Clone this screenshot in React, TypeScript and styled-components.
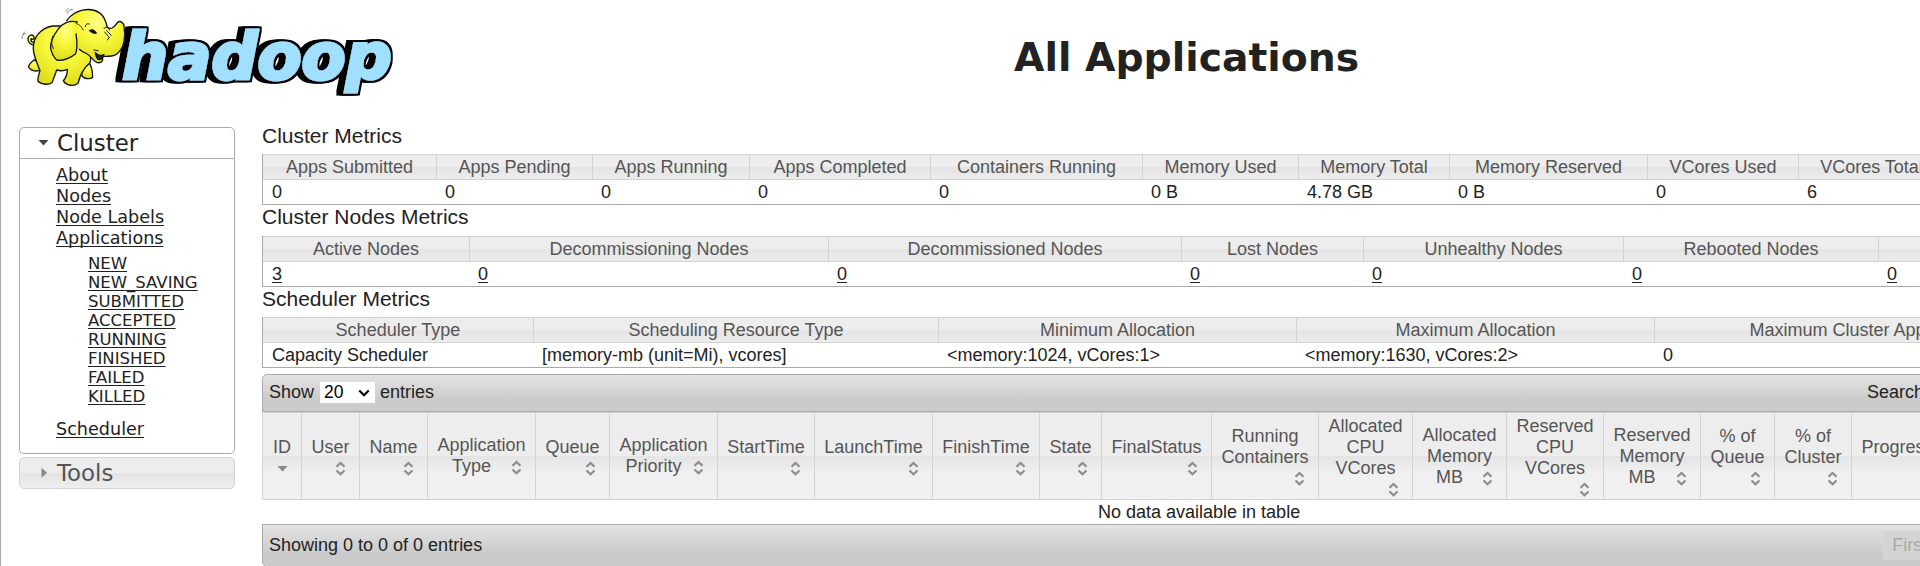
import React from 'react';
import styled, { createGlobalStyle, css } from 'styled-components';

const GlobalStyle = createGlobalStyle`
  body {
    margin: 0;
    background: #fff;
    color: #222;
    overflow: hidden;
    font-family: 'DejaVu Sans', Verdana, sans-serif;
  }
`;

const Page = styled.div`
  box-sizing: border-box;
  height: 566px;
  overflow: hidden;
  border-left: 1px solid #aaa;
`;

const Header = styled.header`
  display: flex;
  align-items: flex-start;
  height: 127px;
`;

const LogoLink = styled.a`
  flex: none;
  width: 420px;
  height: 110px;
  margin-left: -1px;
`;

const Title = styled.h1`
  margin: 35px 0 0 594px;
  font-size: 39.3px;
  line-height: 46px;
  font-weight: bold;
  white-space: nowrap;
`;

const Columns = styled.div`
  display: flex;
  align-items: flex-start;
`;

const Sidebar = styled.nav`
  flex: none;
  box-sizing: border-box;
  width: 261px;
  padding: 0 27px 0 18px;
`;

const glass = css`
  color: #555;
  background: linear-gradient(#ededed 50%, #e4e4e4 50%, #f0f0f0 calc(50% + 18px));
`;

const bar = css`
  border: 1px solid #aaa;
  background: linear-gradient(#e3e3e3, #cbcbcb 70%, #cbcbcb);
`;

const SectionHeader = styled.h3<{ $open?: boolean }>`
  box-sizing: border-box;
  display: flex;
  align-items: center;
  height: 32px;
  margin: 0;
  padding-left: 18px;
  font-size: 22.9px;
  font-weight: normal;
  ${(p) =>
    p.$open
      ? css`
          border: 1px solid #aaa;
          border-radius: 5px 5px 0 0;
          background: #fff;
        `
      : css`
          ${glass}
          margin-top: 3px;
          border: 1px solid #d3d3d3;
          border-radius: 5px;
        `}
  svg {
    flex: none;
    margin-right: 7px;
  }
`;

const SectionBody = styled.div`
  box-sizing: border-box;
  height: 295px;
  padding: 6px 0 0 36px;
  border: 1px solid #aaa;
  border-top: 0;
  border-radius: 0 0 5px 5px;
`;

const NavList = styled.ul`
  margin: 0;
  padding: 0;
  list-style: none;
  font-size: 17.6px;
  line-height: 21px;
`;

const StateList = styled(NavList)`
  margin: 5px 0 13px 32px;
  font-size: 16.5px;
  line-height: 19px;
`;

const Link = styled.a`
  color: #222;
  text-decoration: underline;
  text-decoration-thickness: 1px;
  text-underline-offset: 2px;
  text-decoration-skip-ink: none;
`;

const Content = styled.main`
  flex: none;
  width: 2300px;
  margin-top: -3px;
  font-family: 'Liberation Sans', Arial, sans-serif;
  font-size: 18px;
`;

const MetricsTitle = styled.div<{ $height: number }>`
  height: ${(p) => p.$height}px;
  font-size: 21px;
  line-height: 23px;
`;

const MetricsTable = styled.div<{ $cols: string }>`
  display: grid;
  grid-template-columns: ${(p) => p.$cols};
  border-left: 1px solid #aaa;
`;

const MetricsHead = styled.div`
  ${glass}
  box-sizing: border-box;
  height: 26px;
  border: solid #d3d3d3;
  border-width: 1px 1px 1px 0;
  line-height: 25px;
  text-align: center;
  white-space: nowrap;
`;

const MetricsCell = styled.div<{ $first?: boolean }>`
  box-sizing: border-box;
  height: 25px;
  padding-left: ${(p) => (p.$first ? 9 : 8)}px;
  border-bottom: 1px solid #aaa;
  line-height: 25px;
  white-space: nowrap;
`;

const Toolbar = styled.div`
  ${bar}
  box-sizing: border-box;
  display: flex;
  height: 38px;
  margin-top: 6px;
  padding: 0 6px;
  border-radius: 5px 0 0 0;
  line-height: 35px;
`;

const LengthSelect = styled.span`
  box-sizing: border-box;
  display: flex;
  align-items: center;
  justify-content: space-between;
  width: 55px;
  height: 21px;
  margin: 7px 5px 0 6px;
  padding: 0 5px 0 4px;
  background: #fff;
  color: #000;
  font-size: 17.5px;
  line-height: 21px;
`;

const SearchLabel = styled.label`
  margin-left: 1433px;
`;

const AppsHead = styled.div`
  display: flex;
  height: 88px;
`;

const AppsColumn = styled.div<{ $width: number }>`
  ${glass}
  box-sizing: border-box;
  flex: none;
  display: flex;
  flex-direction: column;
  justify-content: center;
  width: ${(p) => p.$width}px;
  border: solid #d3d3d3;
  border-width: 1px 1px 1px 0;
  &:first-child {
    border-left-width: 1px;
  }
`;

const ColumnLabel = styled.div`
  padding: 0 9px;
  line-height: 21px;
  text-align: center;
  white-space: pre;
`;

const SortIcon = styled.svg<{ $raised?: boolean }>`
  float: right;
  display: block;
  width: 18px;
  height: 18px;
  margin: ${(p) => (p.$raised ? '-20px 9px 2px 0' : '0 9px 0 0')};
`;

const EmptyRow = styled.div`
  height: 24px;
  padding-left: 836px;
  line-height: 25px;
`;

const Footer = styled.div`
  ${bar}
  box-sizing: border-box;
  display: flex;
  height: 43px;
  padding: 0 6px;
  border-radius: 0 0 0 5px;
  line-height: 41px;
`;

const PageButton = styled.span`
  box-sizing: border-box;
  height: 29px;
  margin: 6px 0 0 1401px;
  padding: 0 8px;
  border: 1px solid #d6d6d6;
  background: #d4d4d4;
  color: #aaa;
  line-height: 27px;
`;

const Logo = () => (
  <svg width="420" height="110" viewBox="0 0 1260 330">
    <defs>
      <radialGradient id="hide" cx="0.55" cy="0.25" r="0.75">
        <stop offset="0" stopColor="#ffff8a" />
        <stop offset="0.45" stopColor="#f8f83c" />
        <stop offset="1" stopColor="#dede1a" />
      </radialGradient>
      <filter id="extrude" x="-0.1" y="-0.3" width="1.2" height="1.6">
        <feMorphology in="SourceAlpha" operator="dilate" radius="6" result="rim" />
        <feOffset in="rim" dx="-7" dy="0" result="mid" />
        <feOffset in="rim" dx="-14" dy="0" result="far" />
        <feMerge>
          <feMergeNode in="far" />
          <feMergeNode in="mid" />
          <feMergeNode in="rim" />
          <feMergeNode in="SourceGraphic" />
        </feMerge>
      </filter>
    </defs>
    <text
      x="367"
      y="238"
      textLength="808"
      lengthAdjust="spacingAndGlyphs"
      fontFamily="DejaVu Sans, Verdana, sans-serif"
      fontSize="191"
      fontWeight="bold"
      fontStyle="oblique"
      fill="#a1dffe"
      stroke="#a1dffe"
      strokeWidth="9"
      strokeLinejoin="miter"
      filter="url(#extrude)"
    >
      hadoop
    </text>
    <g transform="translate(48 12)" stroke="#111" strokeWidth="4" strokeLinejoin="round" strokeLinecap="round" fill="url(#hide)">
      <path d="M58 122 C44 126 34 112 36 102 C38 92 50 90 54 98 C56 106 48 108 46 104 C42 112 50 118 60 112 Z" />
      <path d="M54 168 C44 176 36 184 38 190 C46 200 60 202 70 200 L76 176 Z" />
      <path d="M196 184 C198 196 196 208 198 216 C206 226 224 226 230 220 C230 204 226 184 216 170 Z" />
      <path d="M110 66 C76 72 50 98 52 136 C54 160 66 184 72 200 C68 214 64 224 66 232 C78 244 100 242 108 236 C114 222 118 210 122 198 C136 202 146 200 154 196 C154 210 150 222 142 230 C150 246 174 248 186 238 C192 218 198 196 222 176 C230 160 210 90 190 66 Z" />
      <path stroke="none" d="M160 50 C176 16 222 8 250 26 C264 36 270 52 274 70 C284 78 296 70 304 56 C312 48 324 56 324 68 C330 96 326 134 300 152 C284 160 266 156 258 158 C264 168 258 178 244 176 C232 172 226 158 214 150 C198 144 186 136 182 120 C150 120 140 80 160 50 Z" />
      <path fill="none" d="M152 50 C176 16 222 8 250 26 C264 36 270 52 274 70 C284 78 296 70 304 56 C312 48 324 56 324 68 C330 96 326 134 300 152 C284 160 266 156 258 158 C264 168 258 178 244 176 C232 172 226 158 214 150 C204 146 196 142 190 136" />
      <path d="M238 146 C246 154 256 156 264 152 C262 160 256 168 246 166 C240 160 240 154 238 146 Z" fill="#222" />
      <path d="M184 54 C160 48 138 58 126 76 C114 92 102 112 104 132 C106 146 110 156 122 168 C140 172 164 162 178 150 C184 140 184 112 180 90" />
      <path d="M180 58 C192 62 198 70 202 78 M110 96 C106 110 106 122 112 134" fill="none" strokeWidth="2.5" />
      <path d="M220 80 C226 74 236 76 242 88 C234 90 226 86 220 80 Z" fill="#111" strokeWidth="2" />
      <path d="M208 68 C208 60 214 58 220 60 M264 74 C268 66 278 68 280 78 M266 84 L278 98 M272 80 L286 94 M280 100 L274 108 M234 138 L246 140" fill="none" strokeWidth="3" />
      <path d="M154 28 C156 20 162 16 170 16 M150 22 L156 14 M18 104 C18 94 24 88 30 88 M20 92 L26 84" fill="none" stroke="#777" strokeWidth="2.5" />
    </g>
  </svg>
);

const DownArrow = () => (
  <svg width="12" height="12" viewBox="0 0 12 12">
    <path d="M.5 3h10L5.5 8.5z" fill="#454545" />
  </svg>
);

const RightArrow = () => (
  <svg width="12" height="12" viewBox="0 0 12 12">
    <path d="M3.5 .8v10L9 5.8z" fill="#888" />
  </svg>
);

const SortGlyph = ({ sorted, raised }: { sorted?: boolean; raised?: boolean }) => (
  <SortIcon viewBox="0 0 18 18" $raised={raised}>
    {sorted ? (
      <path d="M3.5 8h10L8.5 13.4z" fill="#888" />
    ) : (
      <path d="M4.5 8.7L8.5 5L12.5 8.7M4.5 12.5L8.5 16.2L12.5 12.5" fill="none" stroke="#8c8c8c" strokeWidth="2.2" />
    )}
  </SortIcon>
);

type Metrics = { title: string; gap: number; cols: string; links?: boolean; items: [string, string][] };

const METRICS: Metrics[] = [
  {
    title: 'Cluster Metrics',
    gap: 30,
    cols: '174px 156px 157px 181px 212px 156px 151px 198px 151px 146px',
    items: [
      ['Apps Submitted', '0'],
      ['Apps Pending', '0'],
      ['Apps Running', '0'],
      ['Apps Completed', '0'],
      ['Containers Running', '0'],
      ['Memory Used', '0 B'],
      ['Memory Total', '4.78 GB'],
      ['Memory Reserved', '0 B'],
      ['VCores Used', '0'],
      ['VCores Total', '6'],
    ],
  },
  {
    title: 'Cluster Nodes Metrics',
    gap: 31,
    cols: '207px 359px 353px 182px 260px 255px 240px',
    links: true,
    items: [
      ['Active Nodes', '3'],
      ['Decommissioning Nodes', '0'],
      ['Decommissioned Nodes', '0'],
      ['Lost Nodes', '0'],
      ['Unhealthy Nodes', '0'],
      ['Rebooted Nodes', '0'],
      ['', '0'],
    ],
  },
  {
    title: 'Scheduler Metrics',
    gap: 30,
    cols: '271px 405px 358px 358px 483px',
    items: [
      ['Scheduler Type', 'Capacity Scheduler'],
      ['Scheduling Resource Type', '[memory-mb (unit=Mi), vcores]'],
      ['Minimum Allocation', '<memory:1024, vCores:1>'],
      ['Maximum Allocation', '<memory:1630, vCores:2>'],
      ['Maximum Cluster Application Priority', '0'],
    ],
  },
];

type Column = { label: string; width: number; inline?: boolean };

const COLUMNS: Column[] = [
  { label: 'ID', width: 40 },
  { label: 'User', width: 58 },
  { label: 'Name', width: 68 },
  { label: 'Application\nType    ', width: 108, inline: true },
  { label: 'Queue', width: 74 },
  { label: 'Application\nPriority    ', width: 108, inline: true },
  { label: 'StartTime', width: 97 },
  { label: 'LaunchTime', width: 118 },
  { label: 'FinishTime', width: 107 },
  { label: 'State', width: 62 },
  { label: 'FinalStatus', width: 110 },
  { label: 'Running\nContainers', width: 107 },
  { label: 'Allocated\nCPU\nVCores', width: 94 },
  { label: 'Allocated\nMemory\nMB    ', width: 94, inline: true },
  { label: 'Reserved\nCPU\nVCores', width: 97 },
  { label: 'Reserved\nMemory\nMB    ', width: 97, inline: true },
  { label: '% of\nQueue', width: 74 },
  { label: '% of\nCluster', width: 77 },
  { label: 'Progress', width: 92 },
];

const STATES = ['NEW', 'NEW_SAVING', 'SUBMITTED', 'ACCEPTED', 'RUNNING', 'FINISHED', 'FAILED', 'KILLED'];

export default function App() {
  return (
    <>
      <GlobalStyle />
      <Page>
        <Header>
          <LogoLink>
            <Logo />
          </LogoLink>
          <Title>All Applications</Title>
        </Header>
        <Columns>
          <Sidebar>
            <SectionHeader $open>
              <DownArrow />
              Cluster
            </SectionHeader>
            <SectionBody>
              <NavList>
                {['About', 'Nodes', 'Node Labels', 'Applications'].map((name) => (
                  <li key={name}>
                    <Link>{name}</Link>
                  </li>
                ))}
              </NavList>
              <StateList>
                {STATES.map((name) => (
                  <li key={name}>
                    <Link>{name}</Link>
                  </li>
                ))}
              </StateList>
              <NavList>
                <li>
                  <Link>Scheduler</Link>
                </li>
              </NavList>
            </SectionBody>
            <SectionHeader>
              <RightArrow />
              Tools
            </SectionHeader>
          </Sidebar>
          <Content>
            {METRICS.map((m) => (
              <section key={m.title}>
                <MetricsTitle $height={m.gap}>{m.title}</MetricsTitle>
                <MetricsTable $cols={m.cols}>
                  {m.items.map(([name], i) => (
                    <MetricsHead key={i}>{name}</MetricsHead>
                  ))}
                  {m.items.map(([, value], i) => (
                    <MetricsCell key={i} $first={i === 0}>
                      {m.links ? <Link>{value}</Link> : value}
                    </MetricsCell>
                  ))}
                </MetricsTable>
              </section>
            ))}
            <Toolbar>
              <span>Show</span>
              <LengthSelect>
                20
                <svg width="12" height="8" viewBox="0 0 12 8">
                  <path d="M1.3 1.5L6 6.2l4.7-4.7" fill="none" stroke="#000" strokeWidth="2.2" />
                </svg>
              </LengthSelect>
              <span>entries</span>
              <SearchLabel>Search:</SearchLabel>
            </Toolbar>
            <AppsHead>
              {COLUMNS.map((c, i) => (
                <AppsColumn key={i} $width={c.width}>
                  <ColumnLabel>{c.label}</ColumnLabel>
                  <div>
                    <SortGlyph sorted={i === 0} raised={c.inline} />
                  </div>
                </AppsColumn>
              ))}
            </AppsHead>
            <EmptyRow>No data available in table</EmptyRow>
            <Footer>
              <span>Showing 0 to 0 of 0 entries</span>
              <PageButton>First</PageButton>
            </Footer>
          </Content>
        </Columns>
      </Page>
    </>
  );
}
